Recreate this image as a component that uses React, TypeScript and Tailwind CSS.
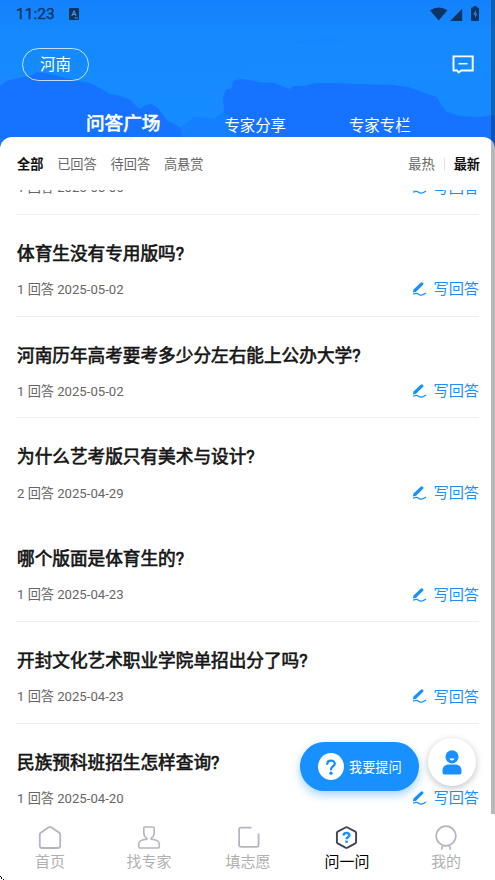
const questions = [
  { title: '', answers: 1, date: '2025-05-06', divider: true },
  { title: '体育生没有专用版吗?', answers: 1, date: '2025-05-02', divider: true },
  { title: '河南历年高考要考多少分左右能上公办大学?', answers: 1, date: '2025-05-02', divider: true },
  { title: '为什么艺考版只有美术与设计?', answers: 2, date: '2025-04-29', divider: false },
  { title: '哪个版面是体育生的?', answers: 1, date: '2025-04-23', divider: true },
  { title: '开封文化艺术职业学院单招出分了吗?', answers: 1, date: '2025-04-23', divider: true },
  { title: '民族预科班招生怎样查询?', answers: 1, date: '2025-04-20', divider: false },
];

const navItems = [
  { label: '首页', icon: <HomeIcon /> },
  { label: '找专家', icon: <ExpertIcon /> },
  { label: '填志愿', icon: <FormIcon /> },
  { label: '问一问', icon: <AskIcon />, active: true },
  { label: '我的', icon: <MineIcon /> },
];

function HomeIcon() {
  return (
    <svg width="26" height="26" viewBox="0 0 26 26" fill="none" stroke="#b5b5c1" strokeWidth="1.8" strokeLinejoin="round">
      <path d="M2.8 9.4Q2.8 8.4 3.7 7.8L11.7 2.3Q13 1.4 14.3 2.3L22.3 7.8Q23.2 8.4 23.2 9.4V20.8Q23.2 23 21 23H5Q2.8 23 2.8 20.8Z" />
    </svg>
  );
}

function ExpertIcon() {
  return (
    <svg width="26" height="26" viewBox="0 0 26 26" fill="none" stroke="#b5b5c1" strokeWidth="1.6" strokeLinejoin="round">
      <path d="M7.8 3Q7.8 2 8.8 2H17.2Q18.2 2 18.2 3V7.5Q18.2 11.5 15.2 13.2V14.2C19.5 14.4 23.3 15.6 23.3 19.2V22Q23.3 23 22.3 23H3.7Q2.7 23 2.7 22V19.2C2.7 15.6 6.5 14.4 10.8 14.2V13.2Q7.8 11.5 7.8 7.5Z" />
    </svg>
  );
}

function FormIcon() {
  return (
    <svg width="26" height="26" viewBox="0 0 26 26" fill="none" stroke="#b5b5c1" strokeWidth="1.8">
      <path d="M16.5 2.6H6.2Q4.1 2.6 4.1 4.5V20Q4.1 21.9 6.2 21.9H21.6Q23.6 21.9 23.6 20V8.5" />
    </svg>
  );
}

function AskIcon() {
  return (
    <svg width="26" height="26" viewBox="0 0 26 26" fill="none" strokeLinejoin="round">
      <path d="M11.5 2.5Q12.5 2 13.5 2.5L21.3 6.6Q22.1 7.1 22.1 8V17Q22.1 17.9 21.3 18.4L13.5 22.6Q12.5 23.1 11.5 22.6L3.7 18.4Q2.9 17.9 2.9 17V8Q2.9 7.1 3.7 6.6Z" stroke="#41415c" strokeWidth="1.9" />
      <path d="M9.6 10.6C9.6 7.3 15.4 7.3 15.4 10.2C15.4 12 12.5 11.9 12.5 14.2" stroke="#1890ff" strokeWidth="2.5" />
      <path d="M11.2 15.6H13.8V17.8H11.2Z" fill="#1890ff" />
    </svg>
  );
}

function MineIcon() {
  return (
    <svg width="26" height="26" viewBox="0 0 26 26" fill="none" stroke="#b5b5c1" strokeWidth="1.7">
      <circle cx="13" cy="11" r="9.8" />
      <path d="M8.6 24.7C8.6 22.5 9.2 21.2 10.4 20.4M17.4 24.7C17.4 22.5 16.8 21.2 15.6 20.4" />
    </svg>
  );
}

function PenIcon() {
  return (
    <svg width="15" height="15" viewBox="0 0 15 15" fill="none">
      <path d="M3.4 8L9.8 1.9" stroke="#1890ff" strokeWidth="3.2" strokeLinecap="round" />
      <path d="M1.7 7.2L4.6 9.6L0.8 10.6Z" fill="#1890ff" />
      <path d="M1 12.3C4 11 5.2 11.1 6.5 12.2C8.2 13.7 10.5 13.6 14 11" stroke="#1890ff" strokeWidth="1.2" />
    </svg>
  );
}

function Mountains() {
  return (
    <svg className="absolute inset-0" width="495" height="150" viewBox="0 0 495 150" preserveAspectRatio="none">
      <defs>
        <linearGradient id="sky" x1="0" y1="0" x2="0" y2="1">
          <stop offset="0" stopColor="#1481fc" />
          <stop offset="0.25" stopColor="#158aff" />
          <stop offset="1" stopColor="#158cff" />
        </linearGradient>
      </defs>
      <rect width="495" height="150" fill="url(#sky)" />
      <path d="M80 55C100 48 125 43 160 41C176 41 185 46 200 55C220 50 232 56 245 66L215 68L120 66L60 66Z" fill="#1587ff" opacity="0.5" />
      <path d="M290 43L303 41L315 40L325 36L332 35L337 40L342 42L325 45Z" fill="#1484fd" opacity="0.6" />
      <path d="M415 84L450 82L495 76V120L440 115Z" fill="#1587ff" opacity="0.5" />
      <path d="M0 86L6 81L18 78L30 76L37 72L45 73L62 77L78 81L90 83L98 87L110 94L120 96L131 100L136 106L140 109L146 105L152 104L158 108L163 115L168 121L178 126L186 132L205 150H0Z" fill="#1573ff" />
      <path d="M180 128L195 117L214 119L224 112L223 97L226 90L232 88L233 81L240 79L250 80L258 82L274 83L282 86L289 89L294 86L305 86L315 83L335 83L355 84L393 85L408 87L422 92L437 97L441 105L447 112L460 116L480 117L495 115V150H185Z" fill="#1573ff" />
      <path d="M180 128L195 117L214 119L224 112L232 120L240 150H185Z" fill="#1580ff" />
    </svg>
  );
}

function StatusBar() {
  return (
    <div className="flex h-7 items-center justify-between pl-4 pr-[15px] text-[#0b3564]">
      <div className="flex items-center">
        <span className="w-[38px] text-[15.5px] leading-7 [-webkit-text-stroke:0.35px]">11:23</span>
        <svg className="ml-[15px]" width="10" height="12" viewBox="0 0 10 12">
          <rect width="10" height="12" rx="1" fill="#0b3564" />
          <path d="M2.8 8L5 3L7.2 8M3.6 6.5H6.4M5.5 10H9" fill="none" stroke="#4f94dc" strokeWidth="1.1" />
        </svg>
      </div>
      <svg className="-mt-px" width="50" height="16" viewBox="0 0 50 16" fill="#0b3564">
        <path d="M0 4.2Q9 -1.3 17.4 4.2L8.7 14.5Z" />
        <path d="M32.2 2.7V15H20.1Z" />
        <path d="M43.5 0H46.5V1.5H48Q49 1.5 49 2.5V14Q49 15 48 15H42Q41 15 41 14V2.5Q41 1.5 42 1.5H43.5Z" />
        <path d="M46 4L43.2 8.5H45V12L47.4 7.5H45.7Z" fill="#3285de" />
      </svg>
    </div>
  );
}

export default function App() {
  return (
    <div className="relative flex h-[880px] w-[495px] flex-col overflow-hidden bg-white font-[Roboto,'Noto_Sans_CJK_SC',sans-serif]">
      <header className="relative h-[150px] shrink-0 overflow-hidden">
        <Mountains />
        <div className="relative">
          <StatusBar />
          <div className="mt-5 flex h-[33px] items-center justify-between pl-[22px] pr-[21px]">
            <button className="h-[33px] w-[67px] rounded-full border border-white/75 pt-px text-[15.4px] leading-[31px] text-white">河南</button>
            <svg width="22" height="20" viewBox="0 0 22 20" fill="none" stroke="white" strokeWidth="1.9">
              <path d="M1.5 1.4H20.7V15.5H9.3L6.6 17.5L5.1 15.5H1.5Z" />
              <path d="M6.5 8.7H15.5" strokeWidth="1.5" />
            </svg>
          </div>
          <nav className="mt-[28px] flex h-[30px] items-center pl-[86px] text-[15.4px] text-white">
            <span className="text-[18.6px] leading-[28px] [-webkit-text-stroke:0.7px]">问答广场</span>
            <span className="ml-[64px] mt-[4px] leading-5">专家分享</span>
            <span className="ml-[63px] mt-[4px] leading-5">专家专栏</span>
          </nav>
        </div>
      </header>

      <main className="relative -mt-[13px] flex h-[677px] shrink-0 flex-col rounded-t-[12px] bg-white">
        <div className="ml-[112px] h-[3px] w-[22px] shrink-0 rounded-b bg-[#f5f6f7]" />
        <div className="flex h-[50px] shrink-0 items-center justify-between pl-[17px] pr-[15px] text-[13.2px] text-[#666]">
          <div className="flex gap-[13.8px]">
            <span className="font-bold text-[#111]">全部</span>
            <span>已回答</span>
            <span>待回答</span>
            <span>高悬赏</span>
          </div>
          <div className="flex items-center">
            <span>最热</span>
            <span className="mx-[9px] h-[13px] w-px bg-[#e2e2e2]" />
            <span className="font-bold text-[#111]">最新</span>
          </div>
        </div>

        <div className="h-[624px] overflow-hidden px-4">
          <div className="-mt-[77px]">
            {questions.map((q, index) => (
              <article
                key={index}
                className={`flex h-[101.8px] flex-col border-b pl-px pt-[26px] ${q.divider ? 'border-[#f3eeee]' : 'border-transparent'}`}
              >
                <h2 className="h-[26px] text-[17.65px] leading-[26px] text-[#151515] [-webkit-text-stroke:0.65px]">{q.title}</h2>
                <div className="mt-[11px] flex h-6 items-center justify-between">
                  <span className="text-[13.15px] text-[#666]">
                    {q.answers} 回答 {q.date}
                  </span>
                  <span className="flex items-center gap-[6px] text-[15.2px] text-[#1890ff]">
                    <PenIcon />
                    写回答
                  </span>
                </div>
              </article>
            ))}
          </div>
        </div>
      </main>

      <footer className="grid h-[66px] shrink-0 grid-cols-5 bg-white">
        {navItems.map((item) => (
          <div
            key={item.label}
            className={`flex flex-col items-center pt-[11px] text-[15px] leading-[22px] ${item.active ? 'text-black' : 'text-[#b0b0b0]'}`}
          >
            {item.icon}
            <span className="pl-px">{item.label}</span>
          </div>
        ))}
      </footer>

      <button className="absolute left-[300px] top-[742px] flex h-[49px] w-[119px] items-center rounded-full bg-[#1890ff] pl-[18px] text-[13.2px] text-white shadow-[0_4px_10px_rgba(24,144,255,0.4)]">
        <svg className="mr-[5px]" width="26" height="27" viewBox="0 0 26 27" fill="none">
          <ellipse cx="13" cy="13.5" rx="13" ry="13.5" fill="white" />
          <path d="M9.3 10.9C9.3 6.6 16.8 6.7 16.8 10.7C16.8 13.4 13 13.2 13 16.4" stroke="#1890ff" strokeWidth="2.3" strokeLinecap="round" />
          <circle cx="13" cy="20.2" r="1.7" fill="#1890ff" />
        </svg>
        <span className="pt-0.5">我要提问</span>
      </button>

      <div className="absolute left-[428px] top-[738px] flex h-12 w-12 items-center justify-center rounded-full bg-white shadow-[0_2px_7px_rgba(0,0,0,0.25)]">
        <svg width="20" height="25" viewBox="0 0 20 25" fill="#1890ff">
          <circle cx="10" cy="6.8" r="6.6" />
          <path d="M0.5 22.5V20.5C0.5 16.5 3.5 14.5 7 14.5H13C16.5 14.5 19.5 16.5 19.5 20.5V22.5Q19.5 24.5 17.5 24.5H2.5Q0.5 24.5 0.5 22.5Z" />
          <path d="M7.5 8.2Q10 8.9 12.5 8.2Q12 10.5 10 10.5Q8 10.5 7.5 8.2Z" fill="white" />
        </svg>
      </div>

      <div className="absolute right-0 top-0 h-[814px] w-1 bg-black/28" />
      <svg className="absolute bottom-0 left-0" width="4" height="4" viewBox="0 0 4 4" shapeRendering="crispEdges">
        <path d="M0 0H1V1H0ZM1 1H2V2H1ZM1 2H2V3H1ZM3 3H4V4H3Z" fill="black" />
      </svg>
    </div>
  );
}
